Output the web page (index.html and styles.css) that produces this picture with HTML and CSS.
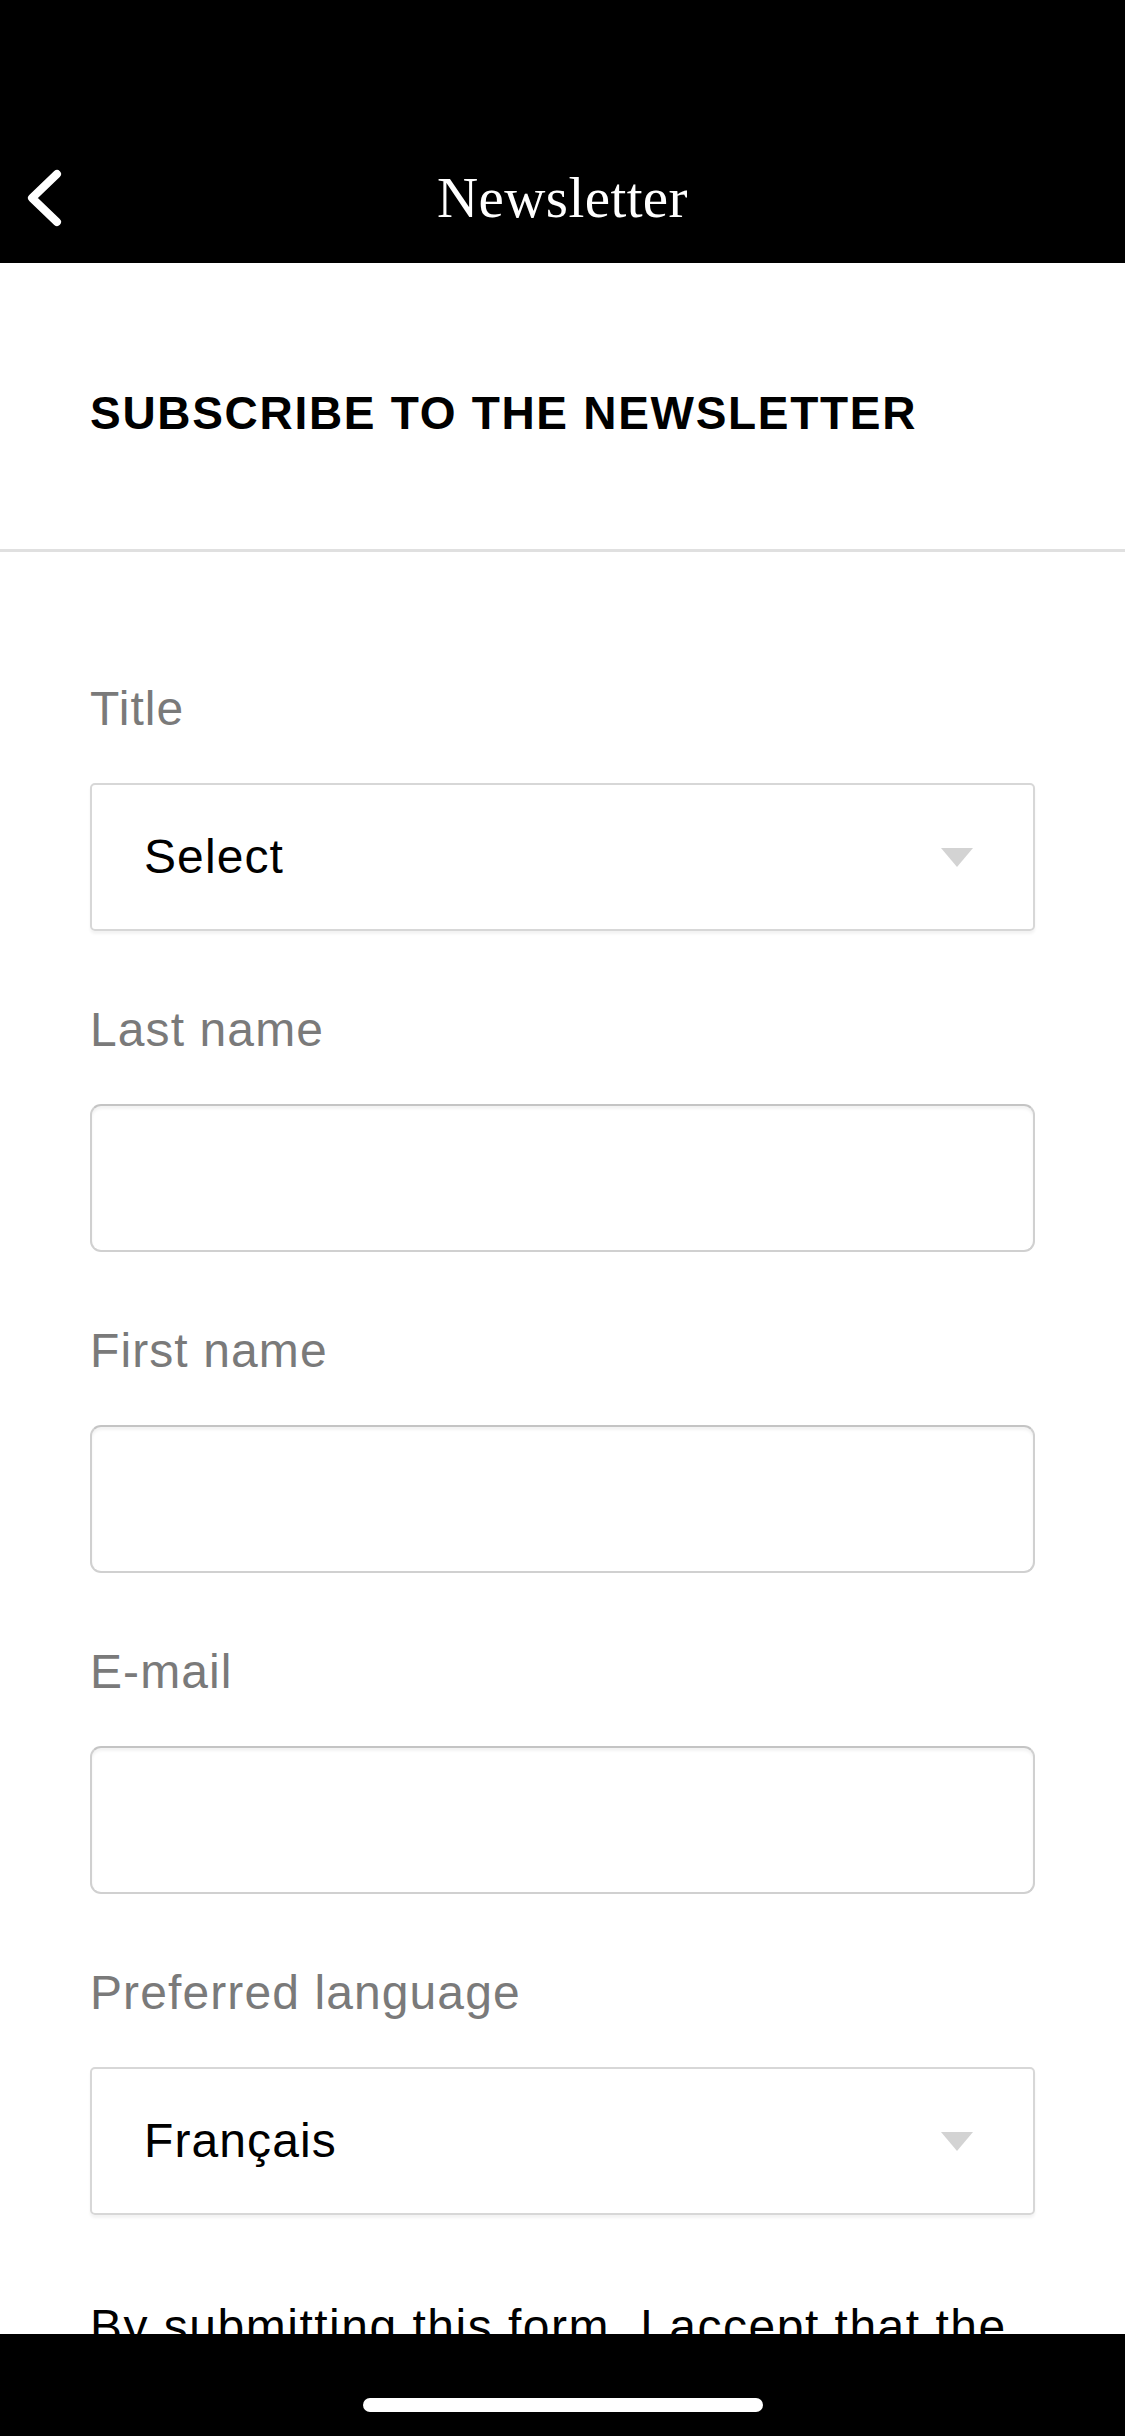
FILE: index.html
```html
<!DOCTYPE html>
<html lang="en">
<head>
<meta charset="utf-8">
<title>Newsletter</title>
<link rel="stylesheet" href="styles.css">
</head>
<body>
<header class="topbar">
  <div class="status"></div>
  <nav class="nav">
    <button class="back" type="button" aria-label="Back">
      <svg class="back-icon" width="50" height="60" viewBox="0 0 50 60">
        <path d="M39 6 L14 30 L39 54" fill="none" stroke="#fff" stroke-width="8" stroke-linecap="round" stroke-linejoin="round"/>
      </svg>
    </button>
    <h1 class="nav-title">Newsletter</h1>
    <span class="nav-spacer"></span>
  </nav>
</header>

<main class="content">
  <section class="intro">
    <h2 class="intro-title">SUBSCRIBE TO THE NEWSLETTER</h2>
  </section>

  <form class="form">
    <div class="field">
      <label class="label">Title</label>
      <div class="select"><span class="value">Select</span><span class="caret"></span></div>
    </div>
    <div class="field">
      <label class="label">Last name</label>
      <div class="input"></div>
    </div>
    <div class="field">
      <label class="label">First name</label>
      <div class="input"></div>
    </div>
    <div class="field">
      <label class="label">E-mail</label>
      <div class="input"></div>
    </div>
    <div class="field">
      <label class="label">Preferred language</label>
      <div class="select"><span class="value">Français</span><span class="caret"></span></div>
    </div>
    <p class="legal">By submitting this form, I accept that the information provided will be used to send me the newsletter.</p>
  </form>
</main>

<div class="home-bar"><span class="indicator"></span></div>
</body>
</html>
```

FILE: styles.css
```css
* {
  box-sizing: border-box;
}

html, body {
  margin: 0;
  padding: 0;
  background: #fff;
}

body {
  font-family: "Liberation Sans", Arial, Helvetica, sans-serif;
  color: #000;
}

.topbar {
  background: #000;
}

.status {
  height: 132px;
}

.nav {
  height: 131px;
  display: grid;
  grid-template-columns: 1fr auto 1fr;
  align-items: center;
}

.back {
  justify-self: start;
  background: none;
  border: 0;
  padding: 0;
  margin: 0 0 0 18px;
  display: flex;
  align-items: center;
  cursor: pointer;
}

.back-icon {
  display: block;
}

.nav-title {
  margin: 0;
  font-family: "Liberation Serif", "Times New Roman", serif;
  font-weight: 400;
  font-size: 57px;
  letter-spacing: 0.4px;
  color: #fff;
}

.intro {
  padding: 123px 90px 109px;
  border-bottom: 3px solid #e0e0e0;
}

.intro-title {
  margin: 0;
  font-size: 46px;
  line-height: 54px;
  font-weight: 700;
  letter-spacing: 1.7px;
}

.form {
  padding: 129px 90px 0;
}

.field {
  display: flex;
  flex-direction: column;
  gap: 46px;
  margin-bottom: 71px;
}

.label {
  font-size: 48px;
  line-height: 56px;
  letter-spacing: 1.1px;
  color: #7a7a7a;
}

.select {
  height: 148px;
  border: 2px solid #d7d7d7;
  border-radius: 5px;
  box-shadow: 0 3px 3px rgba(0, 0, 0, 0.05);
  display: flex;
  align-items: center;
  justify-content: space-between;
  padding: 0 60px 0 52px;
}

.value {
  font-size: 48px;
  line-height: 56px;
  letter-spacing: 1.1px;
  color: #000;
}

.caret {
  width: 0;
  height: 0;
  border-left: 16.5px solid transparent;
  border-right: 16.5px solid transparent;
  border-top: 19px solid #d3d3d3;
}

.input {
  height: 148px;
  border: 2.5px solid #d0d0d0;
  border-top-color: #c4c4c4;
  border-radius: 11px;
  box-shadow: inset 0 3px 3px rgba(0, 0, 0, 0.05);
  background: #fff;
}

.legal {
  margin: 0;
  padding: 13px 0 200px;
  font-size: 48px;
  line-height: 56px;
  letter-spacing: 1.5px;
  color: #000;
}

.home-bar {
  position: fixed;
  left: 0;
  right: 0;
  bottom: 0;
  height: 102px;
  background: #000;
  display: flex;
  justify-content: center;
  padding-top: 64px;
}

.indicator {
  width: 400px;
  height: 14px;
  border-radius: 7px;
  background: #fff;
}
```
